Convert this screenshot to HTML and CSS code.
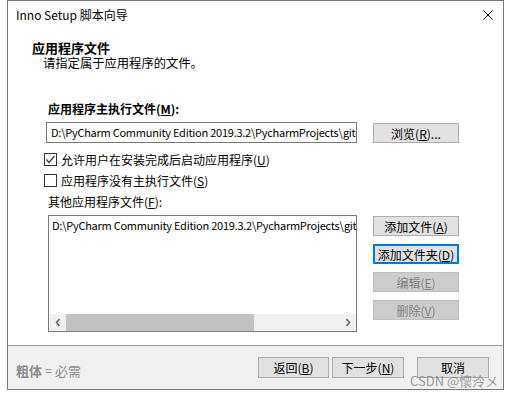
FILE: index.html
```html
<!DOCTYPE html>
<html lang="zh-CN">
<head>
<meta charset="utf-8">
<title>Inno Setup 脚本向导</title>
<link rel="stylesheet" href="styles.css">
</head>
<body>
<div class="window">
  <div class="titlebar">
    <span class="title-text">Inno Setup 脚本向导</span>
    <svg class="close" width="10" height="10" viewBox="0 0 10 10"><path d="M0.5 0.5L9.5 9.5M9.5 0.5L0.5 9.5" stroke="#000" stroke-width="1" fill="none"/></svg>
  </div>
  <div class="header">
    <div class="h-title">应用程序文件</div>
    <div class="h-sub">请指定属于应用程序的文件。</div>
  </div>
  <div class="content">
    <div class="label bold">应用程序主执行文件(<u>M</u>):</div>
    <div class="row">
      <div class="input">D:\PyCharm Community Edition 2019.3.2\PycharmProjects\gitee\project\main.exe</div>
      <button class="btn side">浏览(<u>R</u>)...</button>
    </div>
    <div class="check first">
      <span class="box"><svg width="11" height="11" viewBox="0 0 11 11"><path d="M1.5 5.5L4 8.5L9.5 2" stroke="#333" stroke-width="1.2" fill="none"/></svg></span>
      <span>允许用户在安装完成后启动应用程序(<u>U</u>)</span>
    </div>
    <div class="check">
      <span class="box"></span>
      <span>应用程序没有主执行文件(<u>S</u>)</span>
    </div>
    <div class="label other">其他应用程序文件(<u>F</u>):</div>
    <div class="row list-row">
      <div class="list">
        <div class="list-items">
          <div class="list-item">D:\PyCharm Community Edition 2019.3.2\PycharmProjects\gitee\project\*</div>
        </div>
        <div class="hscroll">
          <div class="arrow"><svg width="6" height="9" viewBox="0 0 6 9"><path d="M4.5 1L1.5 4.5L4.5 8" stroke="#606060" stroke-width="1.4" fill="none"/></svg></div>
          <div class="track"><div class="thumb"></div></div>
          <div class="arrow"><svg width="6" height="9" viewBox="0 0 6 9"><path d="M1.5 1L4.5 4.5L1.5 8" stroke="#606060" stroke-width="1.4" fill="none"/></svg></div>
        </div>
      </div>
      <div class="btn-col">
        <button class="btn side">添加文件(<u>A</u>)</button>
        <button class="btn side focused">添加文件夹(<u>D</u>)</button>
        <button class="btn side disabled">编辑(<u>E</u>)</button>
        <button class="btn side disabled">删除(<u>V</u>)</button>
      </div>
    </div>
  </div>
  <div class="footer">
    <div class="legend"><b>粗体</b> = 必需</div>
    <div class="footer-btns">
      <button class="btn fbtn">返回(<u>B</u>)</button>
      <button class="btn fbtn">下一步(<u>N</u>)</button>
      <button class="btn fbtn cancel">取消</button>
    </div>
  </div>
</div>
<div class="watermark">CSDN @懷泠メ</div>
</body>
</html>
```

FILE: styles.css
```css
* { box-sizing: border-box; }
html, body { margin: 0; padding: 0; background: #fff; }
body {
  font-family: "Noto Sans CJK SC", "Noto Sans", sans-serif;
  font-size: 12px;
  color: #000;
  width: 511px;
  height: 397px;
  position: relative;
  overflow: hidden;
}
u { text-decoration: underline; text-underline-offset: 1px; }
.window {
  margin-left: 7px;
  width: 497px;
  height: 390px;
  border: 1px solid #7a7a7a;
  display: flex;
  flex-direction: column;
  background: #fff;
}
.titlebar {
  height: 28px;
  line-height: 28px;
  padding: 0 10px 0 8px;
  display: flex;
  align-items: center;
  justify-content: space-between;
}
.title-text { font-size: 12px; }
.close { display: block; }
.header { padding: 11px 0 0 24px; }
.h-title { font-size: 13px; font-weight: bold; line-height: 16px; }
.h-sub { line-height: 14px; padding-left: 11px; font-size: 12.3px; }
.content { padding: 31px 0 0 38px; }
.label { line-height: 16px; padding-left: 2px; }
.bold { font-weight: bold; }
.row { display: flex; align-items: flex-start; margin-top: 5px; }
.input {
  width: 311px;
  height: 21px;
  border: 1px solid #7a7a7a;
  line-height: 19px;
  padding-left: 4px;
  white-space: nowrap;
  overflow: hidden;
  font-size: 11px;
  letter-spacing: -0.25px;
}
.btn {
  font-family: inherit;
  font-size: 12px;
  color: #000;
  background: #e1e1e1;
  border: 1px solid #adadad;
  height: 21px;
  padding: 0;
  line-height: 19px;
  margin: 0;
}
.side { width: 86px; margin-left: 16px; }
.row .btn.side { margin-top: 1px; height: 20px; }
.focused { border-color: #0078d7; box-shadow: inset 0 0 0 1px #0078d7; }
.disabled { background: #cccccc; border-color: #bfbfbf; color: #838383; }
.check { display: flex; align-items: center; height: 21px; margin-left: -2px; }
.check.first { margin-top: 6px; }
.box {
  width: 13px;
  height: 13px;
  border: 1px solid #333;
  background: #fff;
  margin-right: 4px;
  display: flex;
  align-items: center;
  justify-content: center;
}
.box svg { display: block; }
.other { margin-top: 3px; }
.list-row { margin-top: 5px; }
.list {
  margin-left: 2px;
  width: 309px;
  height: 117px;
  border: 1px solid #7a7a7a;
  display: flex;
  flex-direction: column;
}
.list-items { flex: 1; overflow: hidden; padding: 1px 0 0 3px; }
.list-item { line-height: 16px; white-space: nowrap; font-size: 11px; letter-spacing: -0.25px; }
.hscroll { height: 17px; display: flex; background: #f0f0f0; }
.arrow { width: 17px; display: flex; align-items: center; justify-content: center; }
.track { flex: 1; display: flex; }
.thumb { width: 188px; background: #c2c2c2; }
.btn-col { display: flex; flex-direction: column; gap: 7px; }
.btn-col .btn.side { margin-left: 16px; }
.footer {
  margin-top: auto;
  height: 44px;
  border-top: 1px solid #a0a0a0;
  background: #f0f0f0;
  display: flex;
  align-items: center;
  justify-content: space-between;
  padding: 0 14px 0 8px;
}
.legend { color: #8c8c8c; margin-top: 6px; font-size: 13px; }
.legend b { font-weight: bold; }
.footer-btns { display: flex; }
.fbtn { width: 72px; margin-left: 3px; }
.fbtn:first-child { width: 71px; }
.fbtn.cancel { margin-left: 13px; }
.watermark {
  position: absolute;
  left: 410px;
  top: 372px;
  font-size: 13px;
  line-height: 18px;
  color: rgba(120, 120, 120, 0.75);
  white-space: nowrap;
}
```
